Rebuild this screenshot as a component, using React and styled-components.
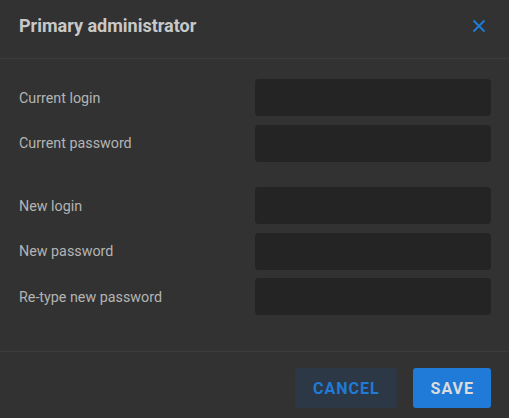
import React from 'react';
import styled, { createGlobalStyle } from "styled-components";

const GlobalStyle = createGlobalStyle`
  html, body {
    margin: 0;
    padding: 0;
    background: #323232;
    font-family: Roboto, "Liberation Sans", sans-serif;
  }
`;

const Dialog = styled.div`
  width: 509px;
  height: 418px;
  background: #323232;
  display: flex;
  flex-direction: column;
  box-sizing: border-box;
`;

const Header = styled.div`
  height: 58px;
  display: flex;
  align-items: center;
  justify-content: space-between;
  padding: 0 18px 0 19px;
  border-bottom: 1px solid #3c3c3c;
  box-sizing: content-box;
`;

const Title = styled.h2`
  margin: 0;
  font-size: 18px;
  font-weight: 700;
  color: #c8c8c8;
  position: relative;
  top: -4px;
`;

const CloseButton = styled.button`
  background: none;
  border: none;
  padding: 0;
  width: 20px;
  height: 20px;
  display: flex;
  align-items: center;
  justify-content: center;
  cursor: pointer;
  margin-right: 2px;
  position: relative;
  top: -3px;
`;

const Body = styled.div`
  flex: 1;
  padding: 20px 18px 0 19px;
  display: flex;
  flex-direction: column;
  gap: 25.5px;
`;

const Group = styled.div`
  display: flex;
  flex-direction: column;
  gap: 8.5px;
`;

const Row = styled.label`
  display: grid;
  grid-template-columns: 1fr 236px;
  align-items: center;
`;

const Label = styled.span`
  font-size: 14.3px;
  color: #b4b4b4;
`;

const Input = styled.input`
  height: 37px;
  box-sizing: border-box;
  background: #242424;
  border: none;
  border-radius: 4px;
  color: #ddd;
  padding: 0 10px;
  font: inherit;
  outline: none;
`;

const Footer = styled.div`
  height: 67px;
  border-top: 1px solid #3c3c3c;
  display: flex;
  justify-content: flex-end;
  align-items: flex-start;
  gap: 16px;
  padding: 16px 18px 0 0;
  box-sizing: border-box;
`;

const Button = styled.button`
  height: 40px;
  padding: 0 17px 0 18px;
  border: none;
  border-radius: 3px;
  font-family: inherit;
  font-size: 16px;
  font-weight: 700;
  letter-spacing: 1px;
  text-transform: uppercase;
  cursor: pointer;
  background: ${p => (p.$primary ? "#1f7bd7" : "#2c3845")};
  color: ${p => (p.$primary ? "#dcdcdc" : "#1f7bd7")};
`;

const groups = [
  ["Current login", "Current password"],
  ["New login", "New password", "Re-type new password"],
];

export default function App() {
  return (
    <>
      <GlobalStyle />
      <Dialog>
        <Header>
          <Title>Primary administrator</Title>
          <CloseButton aria-label="Close">
            <svg width="14" height="14" viewBox="0 0 14 14">
              <path d="M1.5 1.5 L12.5 12.5 M12.5 1.5 L1.5 12.5" stroke="#1f7bd7" strokeWidth="2" fill="none" />
            </svg>
          </CloseButton>
        </Header>
        <Body>
          {groups.map((g, i) => (
            <Group key={i}>
              {g.map(name => (
                <Row key={name}>
                  <Label>{name}</Label>
                  <Input type={name.includes("password") ? "password" : "text"} />
                </Row>
              ))}
            </Group>
          ))}
        </Body>
        <Footer>
          <Button>Cancel</Button>
          <Button $primary>Save</Button>
        </Footer>
      </Dialog>
    </>
  );
}
